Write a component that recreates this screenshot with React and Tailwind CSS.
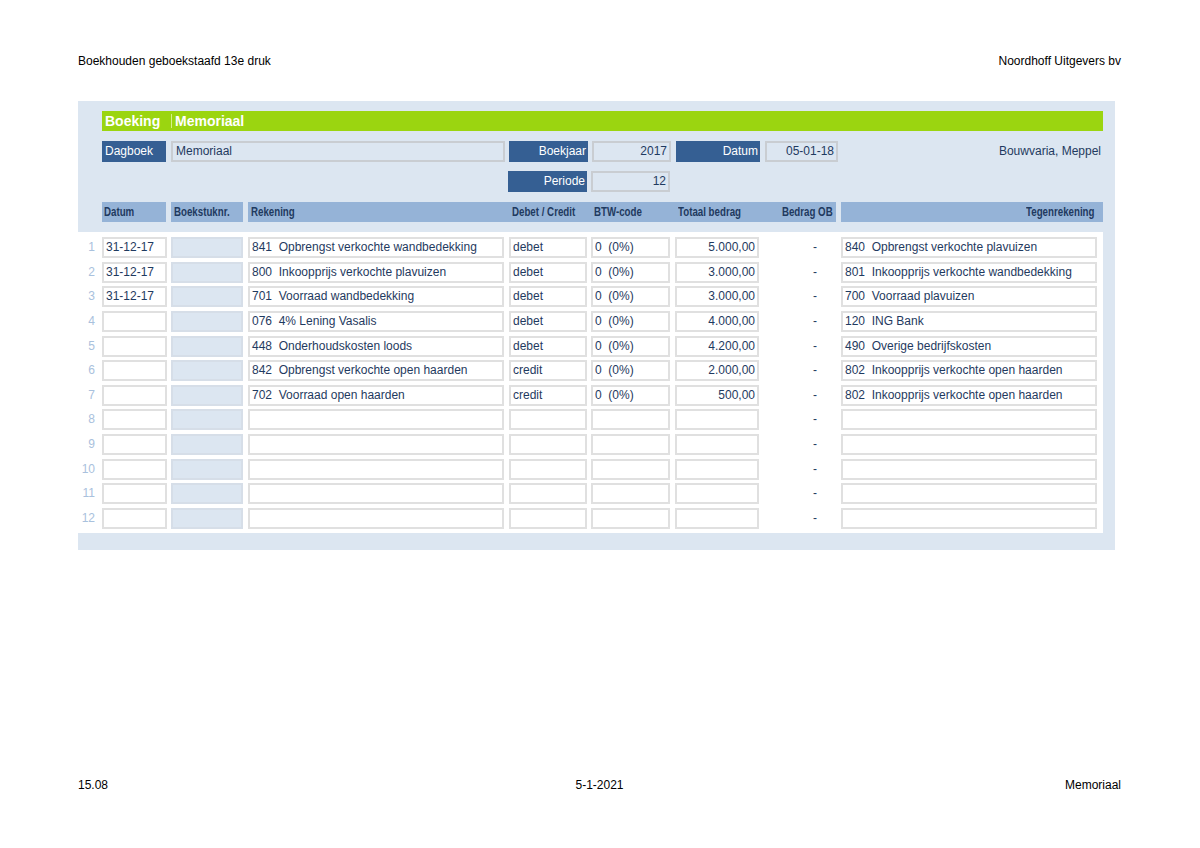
import React from "react";

const rows = [
    { datum: "31-12-17", rek: "841  Opbrengst verkochte wandbedekking", dc: "debet", btw: "0  (0%)", tot: "5.000,00", tegen: "840  Opbrengst verkochte plavuizen" },
    { datum: "31-12-17", rek: "800  Inkoopprijs verkochte plavuizen", dc: "debet", btw: "0  (0%)", tot: "3.000,00", tegen: "801  Inkoopprijs verkochte wandbedekking" },
    { datum: "31-12-17", rek: "701  Voorraad wandbedekking", dc: "debet", btw: "0  (0%)", tot: "3.000,00", tegen: "700  Voorraad plavuizen" },
    { datum: "", rek: "076  4% Lening Vasalis", dc: "debet", btw: "0  (0%)", tot: "4.000,00", tegen: "120  ING Bank" },
    { datum: "", rek: "448  Onderhoudskosten loods", dc: "debet", btw: "0  (0%)", tot: "4.200,00", tegen: "490  Overige bedrijfskosten" },
    { datum: "", rek: "842  Opbrengst verkochte open haarden", dc: "credit", btw: "0  (0%)", tot: "2.000,00", tegen: "802  Inkoopprijs verkochte open haarden" },
    { datum: "", rek: "702  Voorraad open haarden", dc: "credit", btw: "0  (0%)", tot: "500,00", tegen: "802  Inkoopprijs verkochte open haarden" },
    {}, {}, {}, {}, {},
];

const cell = "h-[21px] border-2 border-[#e0e0e0] bg-white px-[2px] text-[12px] leading-[17px] whitespace-pre overflow-hidden";

function Label({ children, className = "" }) {
    return (
        <div className={`h-[21px] bg-[#355f93] text-white text-[12px] leading-[21px] ${className}`}>
            {children}
        </div>
    );
}

function Field({ children, className = "" }) {
    return (
        <div className={`h-[21px] border-2 border-[#c9cdd2] text-[12px] leading-[17px] ${className}`}>
            {children}
        </div>
    );
}

// narrow bold column heading
function Head({ children, right }) {
    return (
        <span className={`inline-block scale-x-[0.81] ${right ? "origin-right" : "origin-left"}`}>
            {children}
        </span>
    );
}

export default function App() {
    return (
        <div
            className="w-[1200px] h-[848px] bg-white text-black flex flex-col"
            style={{ fontFamily: '"Liberation Sans", Arial, sans-serif' }}
        >
            {/* page header */}
            <div className="flex justify-between pl-[78px] pr-[79px] pt-[54px] text-[12px] leading-[14px]">
                <span>Boekhouden geboekstaafd 13e druk</span>
                <span>Noordhoff Uitgevers bv</span>
            </div>

            {/* form panel */}
            <div className="ml-[78px] mt-[33px] w-[1037px] bg-[#dce6f1] text-[#1f3a60]">
                <div className="pt-[10px] pl-[24px] pr-[12px]">
                    <div className="h-[20px] bg-[#9bd510] flex items-center text-white font-bold text-[14px]">
                        <span className="w-[69px] pl-[3px]">Boeking</span>
                        <span className="w-px h-[14px] bg-[#d4f08a]" />
                        <span className="pl-[3px]">Memoriaal</span>
                    </div>

                    <div className="flex mt-[10px] items-start">
                        <Label className="w-[64px] pl-[3px]">Dagboek</Label>
                        <Field className="ml-[5px] w-[334px] pl-[3px]">Memoriaal</Field>
                        <Label className="ml-[4px] w-[79px] text-right pr-[2px]">Boekjaar</Label>
                        <Field className="ml-[4px] w-[79px] text-right pr-[2px]">2017</Field>
                        <Label className="ml-[5px] w-[84px] text-right pr-[2px]">Datum</Label>
                        <Field className="ml-[5px] w-[73px] text-right pr-[2px]">05-01-18</Field>
                        <div className="flex-1 text-right pr-[2px] text-[12px] leading-[21px]">Bouwvaria, Meppel</div>
                    </div>

                    <div className="flex mt-[9px]">
                        <Label className="ml-[406px] w-[79px] text-right pr-[2px]">Periode</Label>
                        <Field className="ml-[4px] w-[79px] text-right pr-[2px]">12</Field>
                    </div>

                    <div className="flex mt-[10px] h-[20px] text-[12px] leading-[20px] font-bold text-[#1f3a60] whitespace-nowrap">
                        <div className="w-[64px] bg-[#95b3d7] pl-[2px]"><Head>Datum</Head></div>
                        <div className="ml-[5px] w-[72px] bg-[#95b3d7] pl-[3px]"><Head>Boekstuknr.</Head></div>
                        <div className="ml-[5px] w-[588px] bg-[#95b3d7] flex">
                            <span className="w-[261px] pl-[3px]"><Head>Rekening</Head></span>
                            <span className="w-[83px] pl-[3px]"><Head>Debet / Credit</Head></span>
                            <span className="w-[84px] pl-[2px]"><Head>BTW-code</Head></span>
                            <span className="w-[84px] pl-[2px]"><Head>Totaal bedrag</Head></span>
                            <span className="flex-1 text-right pr-[3px]"><Head right>Bedrag OB</Head></span>
                        </div>
                        <div className="ml-[5px] flex-1 bg-[#95b3d7] text-right pr-[9px]"><Head right>Tegenrekening</Head></div>
                    </div>
                </div>

                {/* rows */}
                <div className="mt-[10px] mr-[12px] bg-white pt-[5px] text-[#1f3a60]">
                    {rows.map((r, i) => (
                        <div key={i} className="flex items-start h-[24.64px]">
                            <div className="w-[24px] pr-[7px] text-right text-[12px] leading-[21px] text-[#a9c1dd]">{i + 1}</div>
                            <div className={`${cell} w-[65px]`}>{r.datum}</div>
                            <div className="ml-[4px] w-[72px] h-[21px] border-2 border-[#d6dee8] bg-[#dce6f1]" />
                            <div className={`${cell} ml-[5px] w-[256px]`}>{r.rek}</div>
                            <div className={`${cell} ml-[5px] w-[78px]`}>{r.dc}</div>
                            <div className={`${cell} ml-[4px] w-[79px]`}>{r.btw}</div>
                            <div className={`${cell} ml-[5px] w-[84px] text-right`}>{r.tot}</div>
                            <div className="w-[82px] text-right pr-[24px] text-[12px] leading-[21px]">-</div>
                            <div className={`${cell} w-[256px]`}>{r.tegen}</div>
                        </div>
                    ))}
                </div>
                <div className="h-[17px]" />
            </div>

            {/* page footer */}
            <div className="mt-auto mb-[56px] grid grid-cols-3 pl-[78px] pr-[79px] text-[12px] leading-[14px]">
                <span>15.08</span>
                <span className="text-center">5-1-2021</span>
                <span className="text-right">Memoriaal</span>
            </div>
        </div>
    );
}
